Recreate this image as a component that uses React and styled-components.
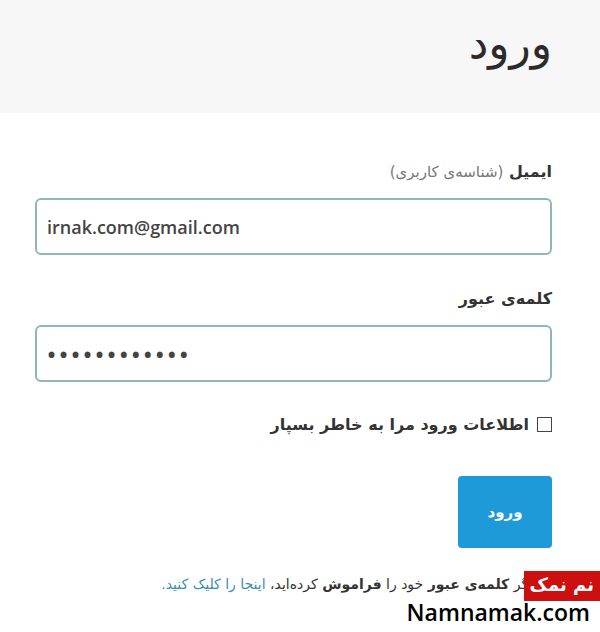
import styled, { createGlobalStyle } from "styled-components";

const GlobalStyle = createGlobalStyle`
  html, body {
    margin: 0;
    padding: 0;
    background: #ffffff;
    font-family: "Open Sans", "DejaVu Sans", sans-serif;
  }
`;

export default function App() {
  return (
    <Page dir="rtl">
      <GlobalStyle />
      <Header>
        <Title>ورود</Title>
      </Header>
      <Form>
        <Field>
          <Label>
            ایمیل <Hint>(شناسه‌ی کاربری)</Hint>
          </Label>
          <Input dir="ltr" defaultValue="irnak.com@gmail.com" />
        </Field>
        <Field>
          <Label>کلمه‌ی عبور</Label>
          <Input dir="ltr" type="password" defaultValue="••••••••••••" $dots />
        </Field>
        <Remember>
          <Box />
          اطلاعات ورود مرا به خاطر بسپار
        </Remember>
        <Submit>ورود</Submit>
        <Footer>
          <Forgot>
            اگر <b>کلمه‌ی عبور</b> خود را <b>فراموش</b> کرده‌اید،{" "}
            <a href="#">اینجا را کلیک کنید.</a>
          </Forgot>
          <Badge>نم نمک</Badge>
          <Site dir="ltr">Namnamak.com</Site>
        </Footer>
      </Form>
    </Page>
  );
}

const Page = styled.div`
  width: 600px;
  height: 632px;
  overflow: hidden;
  background: #fff;
`;

const Header = styled.div`
  background: #f7f7f7;
  height: 113px;
  display: flex;
  padding: 18px 48px 0 0;
  box-sizing: border-box;
`;

const Title = styled.h1`
  margin: 0;
  font-family: "DejaVu Sans", sans-serif;
  font-weight: normal;
  font-size: 44px;
  color: #2b2b2b;
`;

const Form = styled.div`
  padding: 48px 48px 0 35px;
  display: flex;
  flex-direction: column;
`;

const Field = styled.div`
  display: flex;
  flex-direction: column;
  margin-bottom: 33px;
`;

const Label = styled.label`
  font-family: "DejaVu Sans", sans-serif;
  font-weight: bold;
  font-size: 16px;
  color: #333;
  margin-bottom: 15px;
  line-height: 22px;
`;

const Hint = styled.span`
  font-weight: normal;
  font-size: 15px;
  color: #777;
`;

const Input = styled.input`
  height: 57px;
  box-sizing: border-box;
  border: 2px solid #8bb7bd;
  border-radius: 6px;
  padding: 0 10px;
  font-family: "Open Sans", sans-serif;
  font-weight: 600;
  font-size: ${(p) => (p.$dots ? "24px" : "18px")};
  letter-spacing: ${(p) => (p.$dots ? "3px" : "0")};
  color: #444;
  outline: none;
  text-align: left;
`;

const Remember = styled.label`
  display: flex;
  align-items: center;
  gap: 8px;
  font-family: "DejaVu Sans", sans-serif;
  font-weight: bold;
  font-size: 16px;
  color: #333;
`;

const Box = styled.span`
  width: 13px;
  height: 13px;
  border: 1px solid #444;
  background: #fff;
`;

const Submit = styled.button`
  align-self: flex-start;
  margin-top: 42px;
  width: 94px;
  height: 72px;
  border: none;
  border-radius: 4px;
  background: #1e9ad8;
  color: #fff;
  font-family: "DejaVu Sans", sans-serif;
  font-weight: bold;
  font-size: 15px;
`;

const Footer = styled.div`
  position: relative;
  margin-right: -48px;
  margin-top: 25px;
  display: flex;
  flex-direction: column;
  align-items: flex-start;
`;

const Forgot = styled.p`
  margin: 0 68px 0 0;
  font-family: "DejaVu Sans", sans-serif;
  font-size: 14px;
  color: #333;
  line-height: 22px;
  b { font-weight: bold; }
  a { color: #3b8fb5; text-decoration: none; }
`;

const Badge = styled.span`
  position: absolute;
  top: -2px;
  right: 0;
  background: #cc1010;
  color: #fff;
  font-family: "DejaVu Sans", sans-serif;
  font-weight: bold;
  font-size: 18px;
  padding: 2px 6px 4px;
  line-height: 24px;
`;

const Site = styled.div`
  margin: 2px 10px 0 0;
  font-family: "Open Sans", sans-serif;
  font-weight: 600;
  font-size: 23px;
  line-height: 30px;
  color: #000;
`;
